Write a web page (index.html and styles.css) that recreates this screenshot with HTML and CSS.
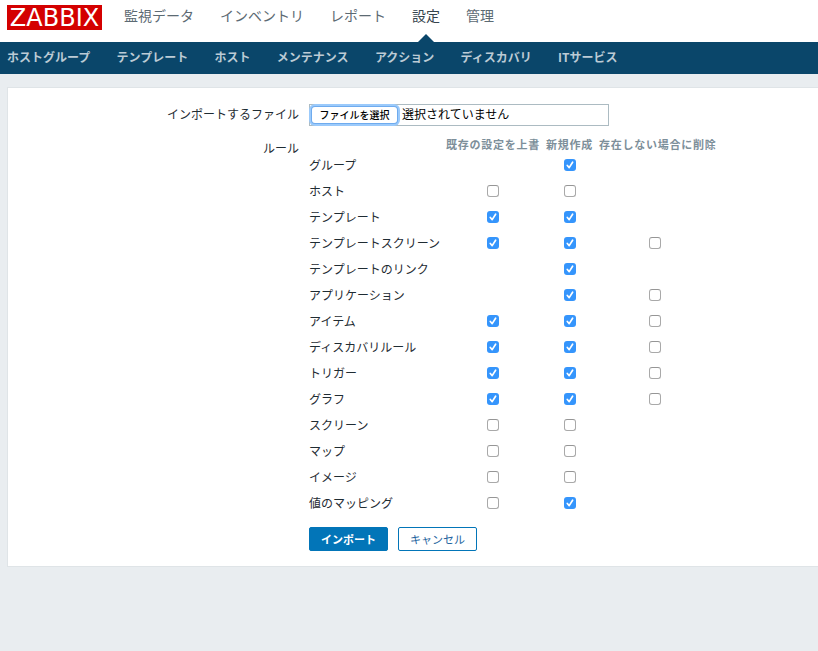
FILE: index.html
```html
<!DOCTYPE html>
<html lang="ja">
<head>
<meta charset="utf-8">
<title>ZABBIX</title>
<link rel="stylesheet" href="styles.css">
</head>
<body>
<header class="top">
  <div class="logo"><span>ZABBIX</span></div>
  <nav class="main-nav">
    <a>監視データ</a><a>インベントリ</a><a>レポート</a><a class="selected">設定</a><a>管理</a>
  </nav>
</header>
<nav class="sub-nav">
  <a>ホストグループ</a><a>テンプレート</a><a>ホスト</a><a>メンテナンス</a><a>アクション</a><a>ディスカバリ</a><a>ITサービス</a>
</nav>
<main class="panel">
  <div class="field file-field">
    <label class="label">インポートするファイル</label>
    <div class="file"><button class="choose" type="button">ファイルを選択</button><span>選択されていません</span></div>
  </div>
  <div class="field">
    <div class="label rules-label">ルール</div>
    <div class="rules" id="rules">
      <div class="row head"><span></span><span>既存の設定を上書</span><span>新規作成</span><span>存在しない場合に削除</span></div>
    </div>
  </div>
  <div class="actions">
    <button class="btn primary" type="button">インポート</button>
    <button class="btn" type="button">キャンセル</button>
  </div>
</main>
<script src="rules.js"></script>
</body>
</html>
```
FILE: rules.js
```js
// Each rule: name and its update / create / delete states (1 checked, 0 unchecked, null absent).
const rules = [
  ["グループ", null, 1, null],
  ["ホスト", 0, 0, null],
  ["テンプレート", 1, 1, null],
  ["テンプレートスクリーン", 1, 1, 0],
  ["テンプレートのリンク", null, 1, null],
  ["アプリケーション", null, 1, 0],
  ["アイテム", 1, 1, 0],
  ["ディスカバリルール", 1, 1, 0],
  ["トリガー", 1, 1, 0],
  ["グラフ", 1, 1, 0],
  ["スクリーン", 0, 0, null],
  ["マップ", 0, 0, null],
  ["イメージ", 0, 0, null],
  ["値のマッピング", 0, 1, null]
];
const tick = '<svg viewBox="0 0 12 12"><path d="M3.3 6.5 5.2 8.6 8.6 3.2"/></svg>';
const box = state => state === null ? "<span></span>"
  : `<span class="box${state ? " checked" : ""}">${state ? tick : ""}</span>`;
document.getElementById("rules").insertAdjacentHTML("beforeend",
  rules.map(([name, ...states]) =>
    `<div class="row"><span class="name">${name}</span>${states.map(box).join("")}</div>`).join(""));
```
FILE: styles.css
```css
* { box-sizing: border-box; }

body {
  margin: 0;
  min-height: 651px;
  overflow: hidden;
  background: #e9edf0;
  color: #1f2c33;
  font: 12px/18px "Noto Sans CJK JP", sans-serif;
  white-space: nowrap;
}

.top {
  display: flex;
  height: 42px;
  padding: 5px 0 0 7px;
  background: #fff;
}

.logo {
  display: flex;
  justify-content: center;
  width: 95px;
  height: 25px;
  background: #d40000;
  color: #fff;
  font: 24px/27px "DejaVu Sans", sans-serif;
}

.main-nav {
  display: flex;
  gap: 26px;
  margin-left: 22px;
  color: #5c6a73;
  font-size: 14px;
  line-height: 21px;
}

.main-nav .selected {
  position: relative;
  color: #36444d;
}

.main-nav .selected::after {
  content: "";
  position: absolute;
  top: 29px;
  left: 6px;
  border: 8px solid transparent;
  border-top: 0;
  border-bottom-color: #0a466a;
}

.sub-nav {
  display: flex;
  gap: 26.3px;
  height: 32px;
  padding-left: 7px;
  background: #0a466a;
  color: #bccbd5;
  font-weight: 700;
  line-height: 29px;
}

.panel {
  height: 480px;
  margin: 13px 0 0 7px;
  padding-top: 16px;
  border: 1px solid #dfe4e7;
  border-right: 0;
  background: #fff;
}

.field { display: flex; gap: 10px; }

.label {
  width: 291px;
  text-align: right;
  line-height: 20px;
}

.rules-label { padding-top: 12px; }

.file {
  display: flex;
  align-items: center;
  gap: 5px;
  width: 300px;
  height: 22px;
  padding-left: 2px;
  border: 1px solid #acbbc2;
  color: #000;
  line-height: 18px;
}

.file span { padding-bottom: 2px; }

.choose {
  width: 85px;
  height: 16px;
  margin-left: 0;
  padding: 0;
  border: 0;
  border-radius: 3px;
  background: #fff;
  box-shadow: 0 0 0 1px #6fabee, 0 0 0 3px #9bcafb;
  color: #000;
  font: 500 10px/16px "Noto Sans CJK JP", sans-serif;
}

.rules { padding-top: 12px; }

.row {
  display: grid;
  grid-template-columns: 131px 94px 47px 112px;
  column-gap: 6px;
  align-items: center;
  justify-items: center;
  height: 26px;
}

.head {
  height: 14px;
  justify-items: start;
  color: #7d8f9a;
  font-size: 11px;
  font-weight: 700;
  letter-spacing: 0.75px;
  line-height: 12px;
}

.head span { padding-bottom: 2px; }

.name { justify-self: start; }

.box {
  width: 12px;
  height: 12px;
  border: 1px solid #a9a9a9;
  border-top-color: #969696;
  border-radius: 3px;
  background: #fff;
}

.checked { border: 0; background: #3595fc; }

.box svg {
  display: block;
  fill: none;
  stroke: #fff;
  stroke-width: 1.7;
  stroke-linecap: round;
  stroke-linejoin: round;
}

.actions {
  display: flex;
  gap: 10px;
  padding: 11px 0 0 301px;
}

.btn {
  width: 79px;
  height: 24px;
  padding: 0;
  border: 1px solid #0275b8;
  border-radius: 2px;
  background: #fff;
  color: #1f65a0;
  font: 11px/22px "Noto Sans CJK JP", sans-serif;
}

.primary {
  background: #0275b8;
  color: #fff;
  font-weight: 700;
}
```
